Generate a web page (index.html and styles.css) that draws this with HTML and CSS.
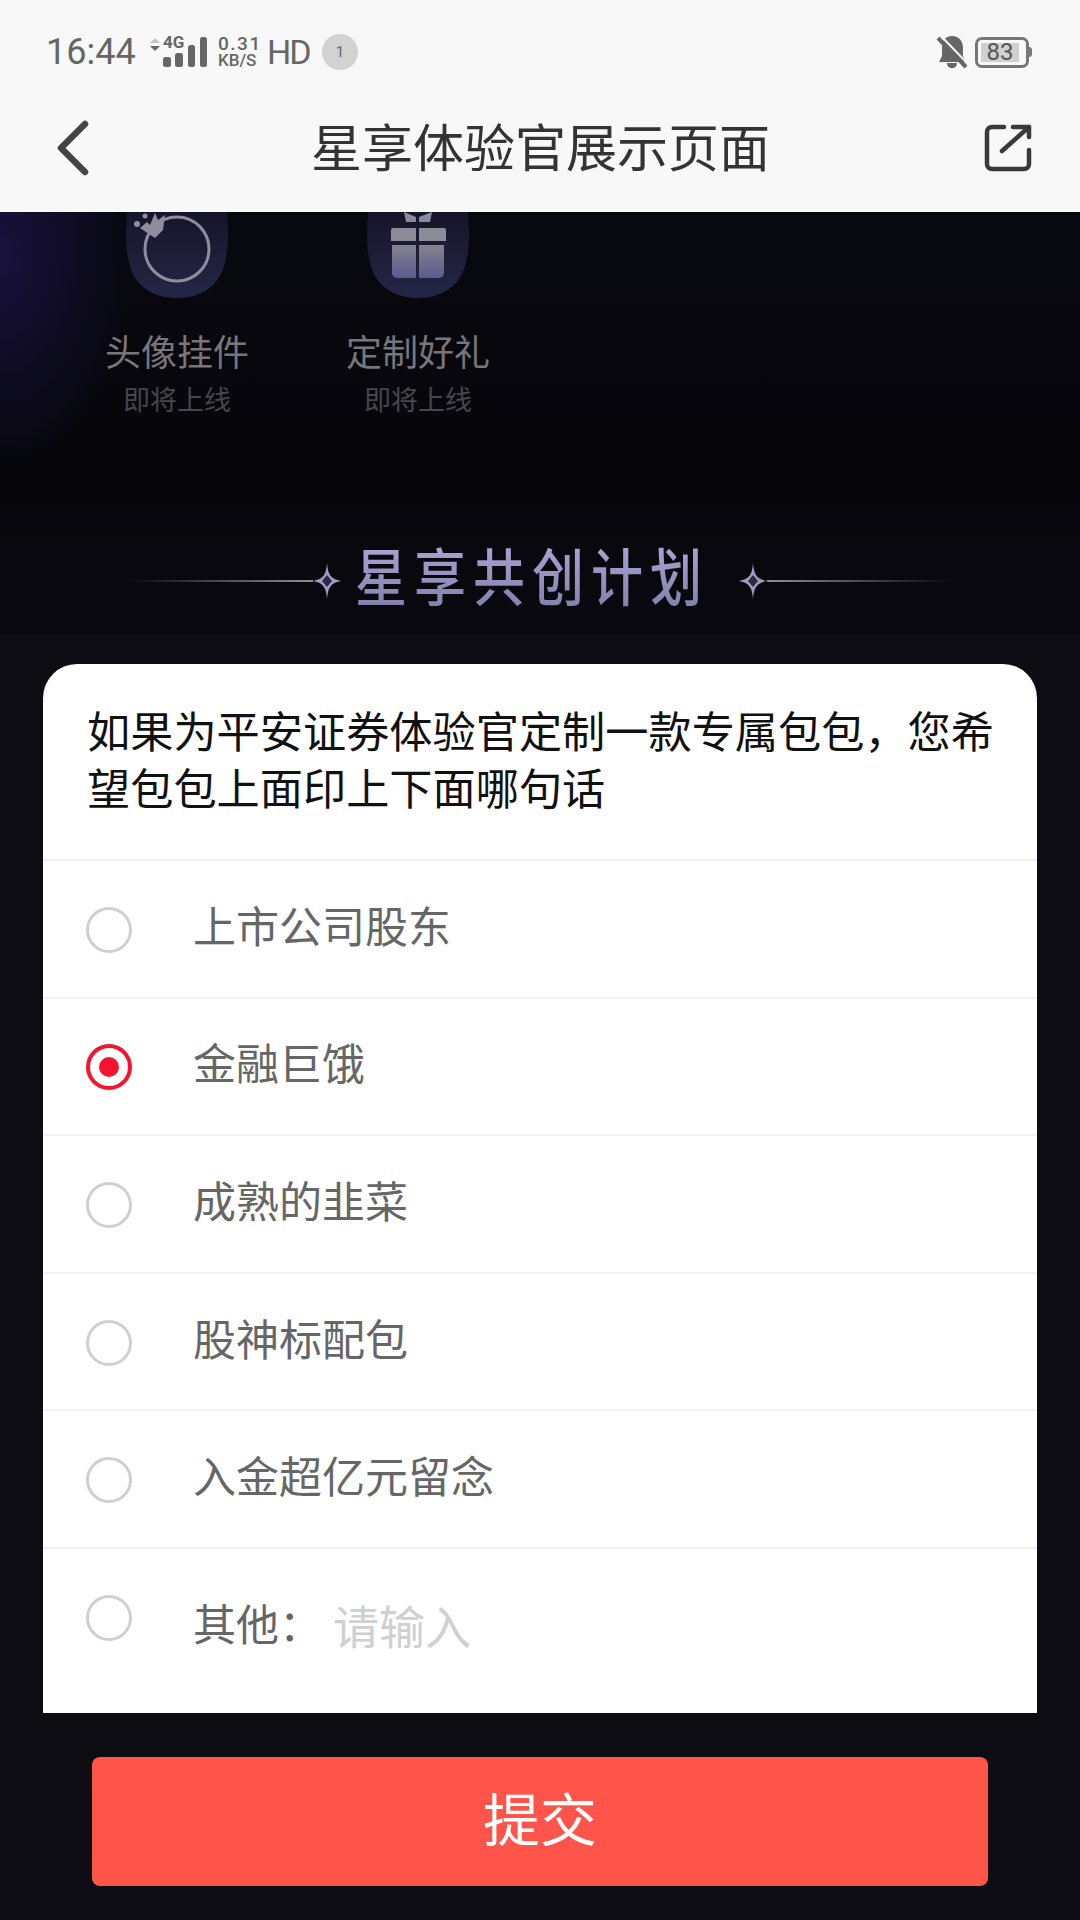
FILE: index.html
```html
<!DOCTYPE html>
<html lang="zh-CN">
<head>
    <meta charset="UTF-8">
    <meta name="viewport" content="width=device-width, initial-scale=1.0">
    <title>星享体验官展示页面</title>
    <link rel="stylesheet" href="styles.css">
</head>
<body>
    <header class="top">
        <div class="status">
            <div class="status-left">
                <span class="time">16:44</span>
                <div class="signal">
                    <svg width="14" height="16" viewBox="0 0 14 16"><path d="M7 0l5 5H2z" fill="#c4c4c4"/><path d="M2 8h10l-5 5z" fill="#666"/></svg>
                    <div class="signal-main">
                        <span class="net">4G</span>
                        <svg class="bars" width="45" height="30" viewBox="0 0 45 30"><rect x="1" y="20" width="8" height="10" rx="2.500"/><rect x="13" y="16" width="8" height="14" rx="2.500"/><rect x="26" y="8" width="7" height="22" rx="2.500"/><rect x="38" y="0" width="7" height="30" rx="2.500"/></svg>
                    </div>
                </div>
                <div class="speed">0.31<br>KB/S</div>
                <span class="hd">HD</span>
                <span class="badge">1</span>
            </div>
            <div class="status-right">
                <svg width="32" height="34" viewBox="0 0 32 34">
                    <path d="M16 1c7 0 11 5 11 12v8l3 6H3l3-6v-9C6 5.500 10 1 16 1z" fill="#666"/>
                    <path d="M11 28h10c0 3-2 5-5 5s-5-2-5-5z" fill="#666"/>
                    <path d="M4.500 0.500l28 29" stroke="#f8f8f8" stroke-width="2"/>
                    <path d="M2 3l28 29" stroke="#666" stroke-width="4"/>
                </svg>
                <div class="battery"><span class="battery-fill">83</span></div>
            </div>
        </div>
        <nav class="nav">
            <svg class="back" width="34" height="56" viewBox="0 0 34 56"><path d="M29 4L5 28l24 24" fill="none" stroke="#444" stroke-width="6.500" stroke-linecap="round" stroke-linejoin="round"/></svg>
            <h1>星享体验官展示页面</h1>
            <svg class="share" width="48" height="48" viewBox="0 0 48 48"><path d="M20 3H8a5 5 0 0 0-5 5v32a5 5 0 0 0 5 5h32a5 5 0 0 0 5-5V26M18 27L45 3M29 3h16v10" fill="none" stroke="#3a3a3a" stroke-width="4.500" stroke-linecap="round" stroke-linejoin="round"/></svg>
        </nav>
    </header>

    <section class="banner">
        <div class="perks">
            <div class="perk">
                <svg width="104" height="86" viewBox="0 0 104 86">
                    <path d="M2 0C1 20 0 34 4 50c5 24 24 36 48 36s43-12 48-36c4-16 3-30 2-50z" fill="url(#tile)"/>
                    <circle cx="52" cy="37" r="32" fill="none" stroke="#8f8c9e" stroke-width="3"/>
                    <path d="M15 16l7-6 3 3 5-12 3 7 7-5-2 15-8 8z" fill="#8f8c9e"/>
                    <circle cx="12" cy="12" r="3" fill="#8f8c9e"/><circle cx="20" cy="4" r="2.500" fill="#8f8c9e"/>
                    <defs><linearGradient id="tile" x1="0" y1="0" x2="0" y2="1"><stop offset="0" stop-color="#17152a"/><stop offset="1" stop-color="#252647"/></linearGradient></defs>
                </svg>
                <span class="perk-name">头像挂件</span>
                <span class="perk-note">即将上线</span>
            </div>
            <div class="perk">
                <svg width="104" height="86" viewBox="0 0 104 86">
                    <path d="M2 0C1 20 0 34 4 50c5 24 24 36 48 36s43-12 48-36c4-16 3-30 2-50z" fill="url(#tile2)"/>
                    <path d="M38 0l12 5v5H40zM66 0L53 5v5h11z" fill="#8d8a99"/>
                    <path d="M25 18a2 2 0 0 1 2-2h23v13H25zM53 16h25a2 2 0 0 1 2 2v11H53z" fill="#8d8a99"/>
                    <path d="M26 33h24v33H31a5 5 0 0 1-5-5zM53 33h25v28a5 5 0 0 1-5 5H53z" fill="url(#box)"/>
                    <defs>
                        <linearGradient id="tile2" x1="0" y1="0" x2="0" y2="1"><stop offset="0" stop-color="#17152a"/><stop offset="1" stop-color="#252647"/></linearGradient>
                        <linearGradient id="box" x1="0" y1="0" x2="0" y2="1"><stop offset="0" stop-color="#85838f"/><stop offset="1" stop-color="#5c5a8e"/></linearGradient>
                    </defs>
                </svg>
                <span class="perk-name">定制好礼</span>
                <span class="perk-note">即将上线</span>
            </div>
        </div>
        <div class="plan">
            <span class="plan-line plan-line-left"></span>
            <svg width="28" height="36" viewBox="0 0 28 36"><path d="M14 0c1 11 3 16 14 18-11 2-13 7-14 18-1-11-3-16-14-18 11-2 13-7 14-18z" fill="#a29cc2"/><path d="M14 12l5 6-5 6-5-6z" fill="#2c2a40"/></svg>
            <h2>星享共创计划</h2>
            <svg width="28" height="36" viewBox="0 0 28 36"><path d="M14 0c1 11 3 16 14 18-11 2-13 7-14 18-1-11-3-16-14-18 11-2 13-7 14-18z" fill="#a29cc2"/><path d="M14 12l5 6-5 6-5-6z" fill="#2c2a40"/></svg>
            <span class="plan-line plan-line-right"></span>
        </div>
    </section>

    <main class="card">
        <p class="question">如果为平安证券体验官定制一款专属包包&#65292;您希望包包上面印上下面哪句话</p>
        <div class="option"><span class="radio"></span><span class="option-text">上市公司股东</span></div>
        <div class="option"><span class="radio radio-on"></span><span class="option-text">金融巨饿</span></div>
        <div class="option"><span class="radio"></span><span class="option-text">成熟的韭菜</span></div>
        <div class="option"><span class="radio"></span><span class="option-text">股神标配包</span></div>
        <div class="option"><span class="radio"></span><span class="option-text">入金超亿元留念</span></div>
        <div class="option option-other">
            <span class="radio"></span>
            <span class="option-text">其他&#65306;</span>
            <span class="placeholder">请输入</span>
        </div>
    </main>

    <div class="actions">
        <button type="button" class="submit">提交</button>
    </div>
</body>
</html>
```

FILE: styles.css
```css
body {
    margin: 0;
    width: 1080px;
    height: 1920px;
    overflow: hidden;
    background-color: #0c0c12;
    font-family: "Noto Sans CJK SC", "Noto Sans", sans-serif;
}
.top {
    background-color: #f8f8f8;
    height: 212px;
}
.status {
    height: 84px;
    box-sizing: border-box;
    padding: 20px 46px 0;
    display: flex;
    justify-content: space-between;
    align-items: center;
    color: #666;
    font-family: Roboto, sans-serif;
}
.status-left {
    display: flex;
    align-items: center;
}
.status-right {
    display: flex;
    align-items: center;
    gap: 7px;
    margin-right: 5px;
}
.time {
    font-size: 36px;
    width: 102px;
}
.signal {
    display: flex;
    align-items: flex-start;
    width: 70px;
    height: 30px;
}
.signal-main {
    position: relative;
}
.signal svg:first-child {
    margin-top: 1px;
}
.bars {
    display: block;
    fill: #666;
}
.net {
    position: absolute;
    left: 1px;
    top: -2px;
    font-size: 17px;
    font-weight: 700;
    line-height: 15px;
}
.speed {
    width: 49px;
    font-size: 17px;
    font-weight: 500;
    line-height: 17px;
}
.speed::first-line {
    font-size: 19px;
    letter-spacing: 1.500px;
}
.hd {
    font-size: 34px;
    letter-spacing: -2px;
    width: 55px;
}
.badge {
    width: 36px;
    height: 36px;
    border-radius: 50%;
    background-color: #d2d2d2;
    font-size: 15px;
    line-height: 36px;
    text-align: center;
}
.battery {
    width: 54px;
    height: 31px;
    box-sizing: border-box;
    border: 3px solid #777;
    border-radius: 7px;
    padding: 3px;
    position: relative;
}
.battery::after {
    content: "";
    position: absolute;
    right: -6px;
    top: 7px;
    width: 3px;
    height: 10px;
    background-color: #777;
    border-radius: 0 3px 3px 0;
}
.battery-fill {
    display: block;
    width: 38px;
    height: 19px;
    background-color: #d0d0d0;
    color: #555;
    font-size: 24px;
    line-height: 19px;
    text-align: center;
}
.nav {
    height: 128px;
    padding: 0 48px 0 56px;
    display: flex;
    justify-content: space-between;
    align-items: center;
}
.back {
    margin-right: 7px;
}
.nav h1 {
    margin: -7px 0 0;
    font-size: 51px;
    font-weight: 400;
    color: #333;
}
.banner {
    height: 423px;
    box-sizing: border-box;
    overflow: hidden;
    background:
        radial-gradient(ellipse 130px 220px at 0 40px, rgba(42, 28, 110, 0.5), rgba(42, 28, 110, 0)),
        linear-gradient(#08080f, #06060b 60%, #09090f);
    padding-left: 125px;
}
.perks {
    display: flex;
    gap: 137px;
}
.perk {
    width: 104px;
    display: flex;
    flex-direction: column;
    align-items: center;
}
.perk svg {
    display: block;
}
.perk-name {
    margin-top: 27px;
    font-size: 36px;
    line-height: 50px;
    color: #77767c;
    white-space: nowrap;
}
.perk-note {
    margin-top: 5px;
    font-size: 27px;
    line-height: 38px;
    color: #47464d;
    white-space: nowrap;
}
.plan {
    margin: 122px 0 0 -125px;
    display: flex;
    justify-content: center;
    align-items: center;
}
.plan h2 {
    margin: 0 30px 12px 14px;
    font-size: 52px;
    line-height: 70px;
    font-weight: 500;
    letter-spacing: 7px;
    background: linear-gradient(#b2aadb, #7f7aa5);
    -webkit-background-clip: text;
    background-clip: text;
    color: transparent;
    transform: scaleY(1.2);
}
.plan-line {
    width: 186px;
    height: 2px;
}
.plan-line-left {
    background: linear-gradient(to right, rgba(150, 145, 170, 0), #8d8a9d);
}
.plan-line-right {
    background: linear-gradient(to left, rgba(150, 145, 170, 0), #8d8a9d);
}
.card {
    margin: 29px 43px 0;
    height: 1049px;
    background-color: #fff;
    border-radius: 34px 34px 0 0;
    overflow: hidden;
}
.question {
    margin: 0;
    padding: 37px 40px 44px 44px;
    font-size: 43.200px;
    line-height: 57px;
    color: #111;
}
.option {
    height: 137.600px;
    box-sizing: border-box;
    border-top: 2px solid #f1f1f1;
    padding-left: 43px;
    display: flex;
    align-items: center;
}
.option-other {
    align-items: flex-start;
    padding-top: 46px;
}
.radio {
    width: 46px;
    height: 46px;
    box-sizing: border-box;
    border: 3px solid #cfcfcf;
    border-radius: 50%;
    margin: 2px 61px 0 0;
    flex-shrink: 0;
    position: relative;
}
.option-other .radio {
    margin-top: 0;
}
.radio-on {
    border: 4px solid #f5132e;
}
.radio-on::after {
    content: "";
    position: absolute;
    left: 9px;
    top: 9px;
    width: 20px;
    height: 20px;
    border-radius: 50%;
    background-color: #f5132e;
}
.option-text {
    font-size: 43px;
    line-height: 60px;
    color: #666;
    margin-top: -10px;
}
.option-other .option-text {
    margin-top: -3px;
}
.placeholder {
    font-size: 46px;
    line-height: 60px;
    color: #d0d0d0;
    margin: -1px 0 0 11px;
}
.actions {
    padding: 44px 92px 0;
}
.submit {
    display: block;
    width: 100%;
    height: 129px;
    padding: 0 0 12px;
    background-color: #ff544a;
    color: #fff;
    border: none;
    border-radius: 8px;
    font-family: inherit;
    font-size: 57px;
}
```
